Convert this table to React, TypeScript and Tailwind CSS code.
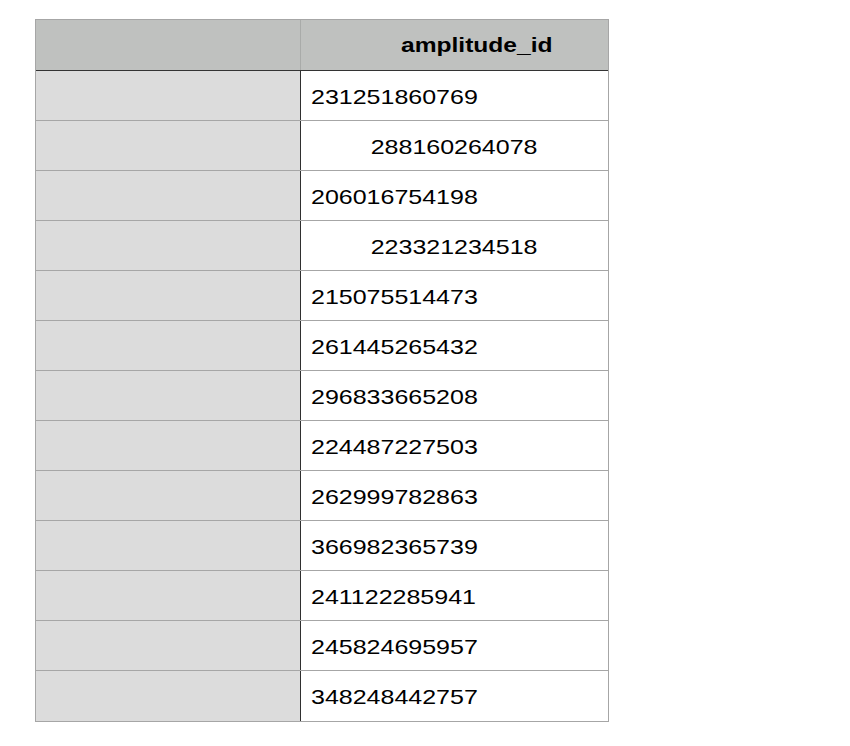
const rows: { id: string; center?: boolean }[] = [
  { id: "231251860769" },
  { id: "288160264078", center: true },
  { id: "206016754198" },
  { id: "223321234518", center: true },
  { id: "215075514473" },
  { id: "261445265432" },
  { id: "296833665208" },
  { id: "224487227503" },
  { id: "262999782863" },
  { id: "366982365739" },
  { id: "241122285941" },
  { id: "245824695957" },
  { id: "348248442757" },
];

const App = () => {
  return (
    <div className="min-h-[746px] w-[850px] bg-white pt-[19px] pl-[35px] text-black [font-family:'Liberation_Sans',Arial,sans-serif]">
      <div className="w-[574px] border border-[#a6a6a6]">
        {/* header */}
        <div className="flex h-[51px] border-b border-[#333333] bg-[#bfc1bf]">
          <div className="w-[265px] border-r border-[#a9aba9]" />
          <div className="flex flex-1 items-center pl-[100px]">
            <span className="inline-block origin-left scale-x-[1.17] text-[21px] font-bold">
              amplitude_id
            </span>
          </div>
        </div>

        {rows.map((row, i) => (
          <div
            key={row.id}
            className={`flex h-[50px] ${i < rows.length - 1 ? "border-b border-[#a6a6a6]" : ""}`}
          >
            <div className="w-[265px] border-r border-[#2f2f2f] bg-[#dcdcdc]" />
            <div
              className={`flex flex-1 items-center pt-[2px] ${row.center ? "justify-center" : "pl-[10px]"}`}
            >
              <span
                className={`inline-block scale-x-[1.19] text-[21px] ${row.center ? "origin-center" : "origin-left"}`}
              >
                {row.id}
              </span>
            </div>
          </div>
        ))}
      </div>
    </div>
  );
};

export default App;
